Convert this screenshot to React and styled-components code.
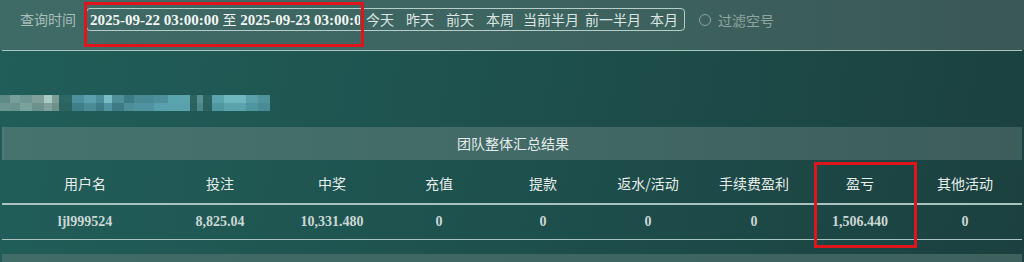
import React from "react"
import styled, { createGlobalStyle } from "styled-components"

const GlobalStyle = createGlobalStyle`
  html, body {
    margin: 0;
    padding: 0;
  }
  body {
    background: #1d4a47;
    font-family: "Noto Sans CJK SC", "Noto Sans", sans-serif;
  }
  * {
    box-sizing: border-box;
  }
`

const Page = styled.div`
  position: relative;
  width: 1024px;
  height: 262px;
  overflow: hidden;
  background: linear-gradient(100deg, #215e59 0%, #1e524f 45%, #1b403f 100%);
`

const TopBar = styled.div`
  height: 50px;
  display: flex;
  align-items: flex-start;
  padding: 8px 0 0 20px;
  background: linear-gradient(90deg, #3f6b66 0%, #3d625e 60%, #3a5855 100%);
`

const Divider = styled.div`
  height: 1px;
  margin: 0 2px;
  background: #a9c6c1;
`

const Label = styled.span`
  font-size: 14px;
  line-height: 23px;
  color: #a9bdb9;
  margin-right: 10px;
`

const RangeGroup = styled.div`
  display: flex;
  height: 23px;
  border: 1px solid #b6ccc8;
  border-radius: 4px;
`

const RangeText = styled.div`
  width: 273px;
  overflow: hidden;
  white-space: nowrap;
  padding-left: 3px;
  font-family: "Liberation Serif", serif;
  font-weight: bold;
  font-size: 15px;
  line-height: 21px;
  color: #f3f6f5;

  span {
    font-family: "Noto Sans CJK SC", sans-serif;
    font-weight: normal;
    font-size: 14px;
  }
`

const QuickButton = styled.span`
  min-width: 40px;
  padding: 0 3px;
  text-align: center;
  font-size: 14px;
  line-height: 21px;
  color: #dbe6e3;
  cursor: pointer;
`

const RadioLabel = styled.label`
  display: flex;
  align-items: center;
  margin-left: 14px;
  height: 23px;
  font-size: 14px;
  color: #8fa5a1;
`

const RadioCircle = styled.span`
  width: 12px;
  height: 12px;
  border: 1.5px solid #8ea4a0;
  border-radius: 50%;
  margin-right: 7px;
`

const InfoArea = styled.div`
  height: 76px;
  padding-top: 44px;
`

const Summary = styled.div`
  margin: 0 2px;
`

const SummaryTitle = styled.div`
  height: 33px;
  line-height: 33px;
  text-align: center;
  font-size: 14px;
  color: #e3ecea;
  background: linear-gradient(90deg, #46736e 0%, #426a66 50%, #3d5d5a 100%);
  border-left: 2px solid #4d7b76;
`

const Row = styled.div`
  display: grid;
  grid-template-columns: 166px 104px 120px 94px 114px 96px 116px 96px 114px;
  align-items: center;
  height: ${({ $head }) => ($head ? "45px" : "35px")};
  border-bottom: ${({ $head }) => ($head ? "2px" : "1px")} solid #a9c4c0;
`

const HeadCell = styled.div`
  text-align: center;
  font-size: 14px;
  color: #e7eeec;
  padding-top: 2px;
`

const Cell = styled.div`
  text-align: center;
  font-family: "Liberation Serif", serif;
  font-weight: bold;
  font-size: 14px;
  color: #cad8d5;
`

const NextBand = styled.div`
  margin: 14px 2px 0;
  height: 20px;
  background: linear-gradient(90deg, #416c67 0%, #3e615d 100%);
`

const Highlight = styled.div`
  position: absolute;
  border: 3px solid #e0151b;
  pointer-events: none;
  left: ${({ $x }) => $x}px;
  top: ${({ $y }) => $y}px;
  width: ${({ $w }) => $w}px;
  height: ${({ $h }) => $h}px;
`

const quick = ["今天", "昨天", "前天", "本周", "当前半月", "前一半月", "本月"]
const headers = ["用户名", "投注", "中奖", "充值", "提款", "返水/活动", "手续费盈利", "盈亏", "其他活动"]
const values = ["ljl999524", "8,825.04", "10,331.480", "0", "0", "0", "0", "1,506.440", "0"]

// pixelated (censored) account line
const mosaic = [
  [0, 10, "#5f8985", "#6d9591"], [10, 10, "#789f9a", "#6a938f"], [20, 12, "#6f9792", "#7aa29d"],
  [32, 12, "#809f9b", "#6b928d"], [44, 8, "#a9c9c3", "#7fa29d"], [52, 7, "#7e9d98", "#6e908b"],
  [59, 13, "#2d6764", "#2b6360"], [72, 12, "#4d8f9a", "#3f7e88"], [84, 12, "#5a9fab", "#4a8c96"],
  [96, 8, "#4d8e98", "#3d7c85"], [104, 8, "#79bcc6", "#4f94a0"], [112, 12, "#4f8f98", "#3e7a83"],
  [124, 10, "#3c7a84", "#4c8d97"], [134, 20, "#4a8a94", "#4f93a0"], [154, 14, "#4d909b", "#58a0ab"],
  [168, 22, "#5aa4ae", "#59a2ad"], [190, 7, "#2b6461", "#2a605d"], [197, 6, "#578f93", "#4e878b"],
  [203, 9, "#2b6360", "#2a605d"], [212, 12, "#5ba4ae", "#4f97a1"], [224, 22, "#6fb7bf", "#5aa3ad"],
  [246, 12, "#5aa0aa", "#4f959f"], [258, 12, "#4f939c", "#4a8c95"],
]

const Mosaic = () => (
  <svg width="272" height="16" viewBox="0 0 272 16" style={{ display: "block" }}>
    {mosaic.map(([x, w, a, b]) => (
      <g key={x}>
        <rect x={x} y="0" width={w} height="8" fill={a} />
        <rect x={x} y="8" width={w} height="8" fill={b} />
      </g>
    ))}
  </svg>
)

export default function App() {
  return (
    <Page>
      <GlobalStyle />
      <TopBar>
        <Label>查询时间</Label>
        <RangeGroup>
          <RangeText>
            2025-09-22 03:00:00 <span>至</span> 2025-09-23 03:00:00
          </RangeText>
          {quick.map((q) => (
            <QuickButton key={q}>{q}</QuickButton>
          ))}
        </RangeGroup>
        <RadioLabel>
          <RadioCircle />
          过滤空号
        </RadioLabel>
      </TopBar>
      <Divider />
      <InfoArea>
        <Mosaic />
      </InfoArea>
      <Summary>
        <SummaryTitle>团队整体汇总结果</SummaryTitle>
        <Row $head>
          {headers.map((h) => (
            <HeadCell key={h}>{h}</HeadCell>
          ))}
        </Row>
        <Row>
          {values.map((v, i) => (
            <Cell key={i}>{v}</Cell>
          ))}
        </Row>
      </Summary>
      <NextBand />
      <Highlight $x={84} $y={2} $w={280} $h={45} />
      <Highlight $x={814} $y={162} $w={103} $h={86} />
    </Page>
  )
}
